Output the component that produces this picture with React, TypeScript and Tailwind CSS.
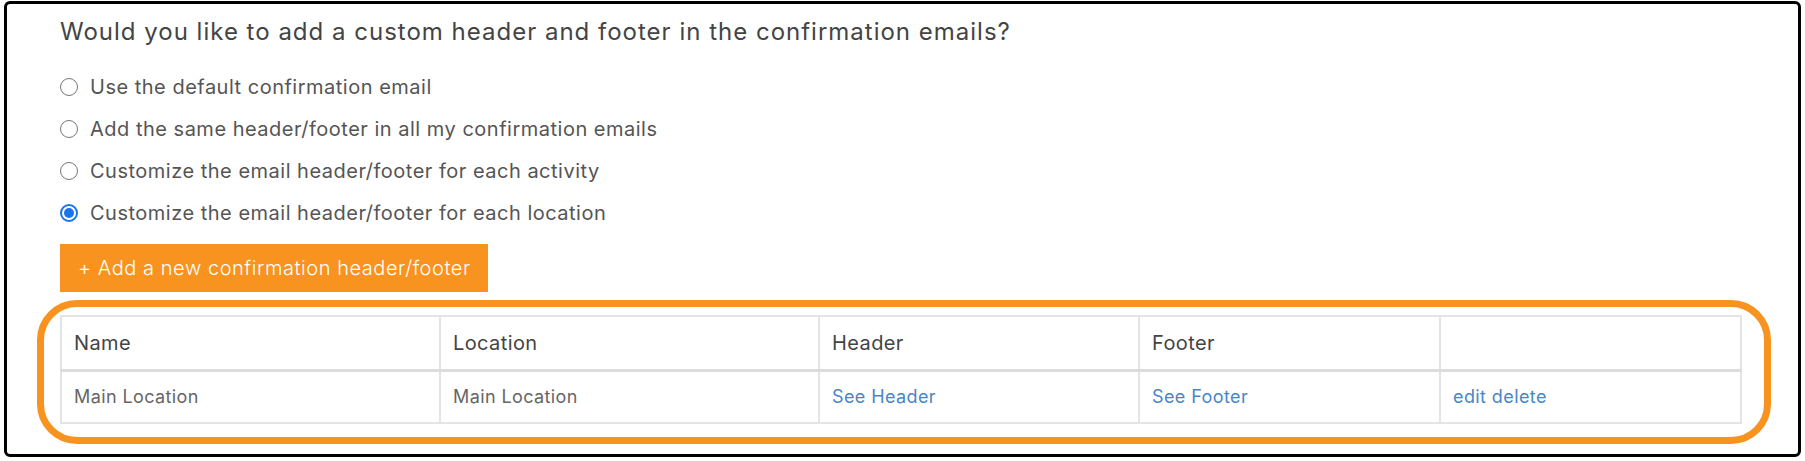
const options = [
  "Use the default confirmation email",
  "Add the same header/footer in all my confirmation emails",
  "Customize the email header/footer for each activity",
  "Customize the email header/footer for each location",
];

function Radio({ checked }: { checked: boolean }) {
  if (checked) {
    return (
      <span className="flex h-[18px] w-[18px] shrink-0 items-center justify-center rounded-full border-2 border-[#1a73e8] bg-white">
        <span className="h-[10px] w-[10px] rounded-full bg-[#1a73e8]" />
      </span>
    );
  }
  return <span className="h-[18px] w-[18px] shrink-0 rounded-full border-[1.5px] border-[#767676] bg-white" />;
}

export default function App() {
  const selected = 3;

  return (
    <div className="h-[461px] w-[1805px] bg-white pl-[4px] pt-[1px] font-['Inter',sans-serif]">
      <div className="h-[456px] w-[1797px] rounded-[6px] border-[3px] border-black bg-white pl-[53px] pr-[57px] pt-[12px]">
        <h2 className="text-[24px] leading-[32px] tracking-[1px] text-[#444]">
          Would you like to add a custom header and footer in the confirmation emails?
        </h2>

        <div className="mt-[18px] flex flex-col">
          {options.map((label, i) => (
            <label key={label} className="flex h-[42px] items-center gap-[12px] text-[20px] tracking-[0.5px] text-[#555]">
              <Radio checked={i === selected} />
              <span>{label}</span>
            </label>
          ))}
        </div>

        <button className="mt-[10px] h-[48px] w-[428px] bg-[#f7931e] pl-[18px] text-left text-[20px] font-light tracking-[0.55px] text-white">
          + Add a new confirmation header/footer
        </button>

        <div className="-ml-[23px] mt-[8px] w-[1734px] rounded-[40px] border-[7px] border-[#f7931e] pb-[13px] pl-[16px] pr-[24px] pt-[8px]">
          <table className="w-[1680px] table-fixed border-collapse text-left tracking-[0.4px]">
            <colgroup>
              <col className="w-[379px]" />
              <col className="w-[379px]" />
              <col className="w-[320px]" />
              <col className="w-[301px]" />
              <col className="w-[301px]" />
            </colgroup>
            <thead>
              <tr className="h-[54px] border-b-[3px] border-[#dcdcdc]">
                {["Name", "Location", "Header", "Footer", ""].map((h, i) => (
                  <th key={i} className="border-2 border-[#e4e4e4] px-[12px] text-[20px] font-normal text-[#444]">
                    {h}
                  </th>
                ))}
              </tr>
            </thead>
            <tbody>
              <tr className="h-[53px] text-[18px]">
                <td className="border-2 border-[#e4e4e4] px-[12px] text-[#666]">Main Location</td>
                <td className="border-2 border-[#e4e4e4] px-[12px] text-[#666]">Main Location</td>
                <td className="border-2 border-[#e4e4e4] px-[12px]">
                  <a className="text-[#4a86c8]">See Header</a>
                </td>
                <td className="border-2 border-[#e4e4e4] px-[12px]">
                  <a className="text-[#4a86c8]">See Footer</a>
                </td>
                <td className="border-2 border-[#e4e4e4] px-[12px] text-[#4a86c8]">
                  <a>edit</a> <a>delete</a>
                </td>
              </tr>
            </tbody>
          </table>
        </div>
      </div>
    </div>
  );
}
